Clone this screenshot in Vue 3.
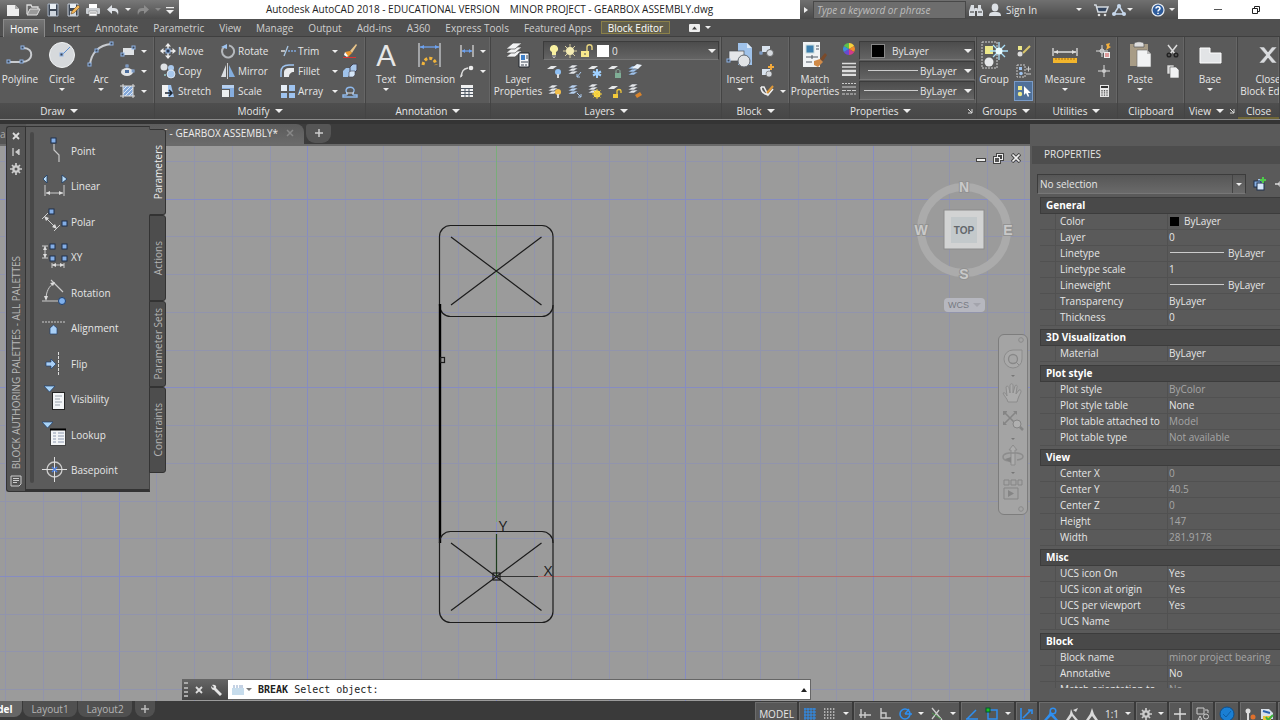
<script setup>
import { h } from 'vue'

const B = '#a9c8ec'
const W = '#e6e8ea'
const sq = (x, y, s = 3) =>
  `<rect x="${x}" y="${y}" width="${s}" height="${s}" fill="#3c4654" stroke="#8fb4e6" stroke-width="1"/>`
const grip = (x, y) =>
  `<rect x="${x}" y="${y}" width="5" height="5" fill="#84aee6" stroke="#1d2f4c" stroke-width="1"/>`
const stack = (x, y, c = W) =>
  [6, 3, 0]
    .map((d) => `<path d="M${x} ${y + d + 3}l4-3h6l-4 3z" fill="${c}" stroke="#4a4e54" stroke-width=".5"/>`)
    .join('')
const sheet = (x, y) => `<path d="M${x} ${y + 3}l4-3h6l-4 3z" fill="${W}"/>`

const icons = {
  newfile: [16, 14, `<path d="M2 2h8l4 4v7H2z" fill="#eee"/><path d="M10 2v4h4z" fill="#aaa"/>`],
  open: [16, 14, `<path d="M2 11V2h4l1 2h6v2" fill="none" stroke="#ddd" stroke-width="1.3"/><path d="M2 12l3-6h10l-3 6z" fill="#9a9a9a" stroke="#ddd"/>`],
  save: [14, 14, `<path d="M2 1h10v12H2z" fill="#3c4654" stroke="#a9b5c5"/><rect x="4" y="1" width="6" height="5" fill="#e8eef4"/><rect x="4" y="8" width="6" height="5" fill="#cfd6de"/>`],
  saveas: [14, 14, `<path d="M2 1h10v12H2z" fill="#3c4654" stroke="#c5cdd8"/><rect x="4" y="1" width="6" height="4" fill="#e8eef4"/><rect x="4" y="8" width="6" height="5" fill="#cfd6de"/><path d="M5 11l1-3 6-6 2 2-6 6z" fill="#f0b456" stroke="#604018" stroke-width=".5"/>`],
  print: [16, 14, `<rect x="4" y="1" width="8" height="4" fill="#fff"/><rect x="1" y="5" width="14" height="6" rx="1" fill="#ccd0d4"/><rect x="4" y="8" width="8" height="5" fill="#fff" stroke="#777" stroke-width=".6"/><path d="M5 10h6" stroke="#888"/>`],
  undo: [14, 14, `<path d="M6 2v3h2c4 0 5 3 4 7-1-3-2-4-4-4H6v3L1 6.500z" fill="#dfe3e8"/>`],
  redo: [14, 14, `<path d="M8 2v3H6C2 5 1 8 2 12c1-3 2-4 4-4h2v3l5-4.500z" fill="#8c8c8c"/>`],
  ddline: [10, 10, `<path d="M1 2h8v1.300H1zM1 5h8L5 9z" fill="#eee"/>`],
  polyline: [28, 28, `<path d="M2 21h14c12 0 12-14 2-14" fill="none" stroke="#c9ccd0" stroke-width="2"/>${sq(1, 19)}${sq(14, 19)}${sq(15, 5)}`],
  circle: [28, 28, `<circle cx="14" cy="14" r="12.500" fill="#d6d9dc" stroke="#f1f3f4"/><path d="M14 14l8-8" stroke="#5d8fd0"/>${sq(12, 12)}`],
  arc: [28, 28, `<path d="M3 24C4 12 12 4 24 3" fill="none" stroke="#c9ccd0" stroke-width="2"/>${sq(1, 22)}${sq(8, 8)}${sq(23, 1)}`],
  rect: [16, 14, `<rect x="3" y="4" width="11" height="7" fill="#dfe2e5"/>${sq(1, 9)}${sq(12, 2)}`],
  ellipse: [16, 14, `<ellipse cx="7" cy="8" rx="6" ry="4" fill="#e2e4e6"/><rect x="5" y="6" width="4" height="3" fill="#4d6f9f"/>${sq(6, 1, 2)}${sq(12, 6, 2)}`],
  hatch: [16, 14, `<rect x="3" y="2" width="10" height="10" fill="#85a9d9"/><path d="M3 6l4-4M3 10l8-8M5 12l8-8M9 12l4-4" stroke="#dfe9f6"/><path d="M0 2h15M0 12h15M3 0v14M13 0v14" stroke="#ddd"/>`],
  move: [16, 16, `<path d="M8 1v14M1 8h14" stroke="#e8e8e8" stroke-width="1.500"/><path d="M8 0l3 3.500H5zM8 16l3-3.500H5zM0 8l3.500-3v6zM16 8l-3.500-3v6z" fill="#eee"/><rect x="6" y="6" width="4" height="4" fill="#2b3950" stroke="#8fb4e6"/>`],
  rotate: [16, 16, `<path d="M9 2.500A6 6 0 1 1 4 4" fill="none" stroke="#b4b8bc" stroke-width="2"/><path d="M1 4l6-3v5z" fill="#9ec3ef"/>`],
  trim: [16, 16, `<path d="M1 8h4" stroke="#ddd" stroke-width="1.500"/><path d="M8 8h8" stroke="#7fa6dc" stroke-dasharray="2 1" stroke-width="1.300"/><path d="M4 13l4-10" stroke="#aac8e6" stroke-width="1.300"/>`],
  erase: [16, 16, `<path d="M8 8l6-7 1 1-5 8z" fill="#e8c48a"/><path d="M3 9l5-1 2 2-4 4z" fill="#ef9a2f"/><path d="M3 9l-1 3 3 2 1-1z" fill="#fff"/><path d="M1 14.500h13" stroke="#d33"/>`],
  copy: [16, 16, `<circle cx="4" cy="4" r="3.500" fill="#dfe2e5"/><circle cx="5" cy="12" r="1" fill="#9cc"/><circle cx="11" cy="5" r="3" fill="${B}"/><circle cx="11" cy="11" r="4" fill="${B}" stroke="#fff" stroke-width=".6"/>`],
  mirror: [16, 16, `<path d="M6 2v12H1z" fill="#dcdfe2"/><path d="M9 2v12h6z" fill="#84aede"/><path d="M7.500 0v16" stroke="#ccc"/>`],
  fillet: [16, 16, `<path d="M1 14V9c0-5 3-7 8-7h5" fill="none" stroke="#9ec3ef" stroke-width="1.500"/><path d="M4 14V9c0-2 2-4 5-4h5v4c-3 0-5 2-5 5z" fill="#e9ebed"/>`],
  explode: [16, 16, `<path d="M1 8l3-3h4v6l-2 3H1z" fill="#9fc2ea"/><path d="M8 4l3-3h4v6l-2 2H8z" fill="${B}" stroke="#445"/><path d="M7 9l2-1h4v4l-2 2H7z" fill="#d5e6f8" stroke="#445" stroke-width=".6"/>`],
  stretch: [16, 16, `<path d="M2 2h6v12H2z" fill="#f1f1f1"/><path d="M8 2h3l3 12H8z" fill="#9ec3ef"/><path d="M5 10h6M9 7l3 3-3 3" fill="none" stroke="#1d2531" stroke-width="1.500"/>`],
  scale: [16, 16, `<path d="M2 2h12v12h-4V6H2z" fill="#86aee0"/><path d="M2 2h12v3H2z" fill="#b7d0ee"/><rect x="2" y="7" width="7" height="7" fill="#eceeef"/>`],
  array: [16, 16, `<rect x="1" y="2" width="6" height="6" fill="#e6eef7"/><rect x="9" y="2" width="6" height="6" fill="#9ec3ef"/><rect x="1" y="10" width="6" height="5" fill="#9ec3ef"/><rect x="9" y="10" width="6" height="5" fill="#9ec3ef"/>`],
  offset: [16, 16, `<path d="M1 14h14v-2h-3c-2 0-1-2 0-4 1-5-8-5-8 0 1 2 2 4 0 4H1z" fill="none" stroke="#8fb9ec" stroke-width="1.400"/><path d="M4 10h8" stroke="#ddd"/>`],
  dimension: [26, 28, `<path d="M2 2v24M23 2v24" stroke="#c9ccd0" stroke-width="1.300"/><path d="M3 6h19" stroke="#6ea2f0" stroke-width="1.300"/><path d="M3 6l4-2v4zM22 6l-4-2v4z" fill="#6ea2f0"/><path d="M6 24c1-9 12-9 13 0" fill="none" stroke="#f2b53c" stroke-width="3" stroke-dasharray="3 2"/>`],
  lindim: [16, 14, `<path d="M2 1v12M14 1v12" stroke="#ccc" stroke-width="1.400"/><path d="M3 7h10" stroke="#6ea2f0" stroke-width="1.300"/><path d="M3 7l3-2v4zM13 7l-3-2v4z" fill="#6ea2f0"/>`],
  leader: [16, 14, `<path d="M2 13C3 7 4 5 9 4" fill="none" stroke="#ddd" stroke-width="1.400"/><path d="M1 14l1-4 2 1z" fill="#ddd"/><circle cx="12" cy="4" r="2.300" fill="#eee"/>`],
  table: [16, 14, `<rect x="2" y="1" width="12" height="12" fill="#f0f0f0"/><path d="M2 4.500h12M2 7.500h12M2 10.500h12M6 4v9M10 4v9" stroke="#4d5662"/>`],
  layerprops: [28, 28, `${[12, 8, 4].map((y) => `<path d="M2 ${y + 4}l7-6h9l-7 6z" fill="#f2f3f4" stroke="#4c4c4c" stroke-width=".7"/>`).join('')}<path d="M15 12h10v14H15z" fill="#f3f5f7" stroke="#20262e"/><rect x="17" y="14" width="4" height="5" fill="#3e7fc8"/><path d="M22 15h2M22 17h2M17 21h7M17 24h3M22 23v2" stroke="#3c4654"/>`],
  bulb: [12, 16, `<path d="M6 2a3.700 3.700 0 0 1 2 7v3H4V9a3.700 3.700 0 0 1 2-7z" fill="#f8f0a0"/><path d="M4 13h4M5 14.500h2" stroke="#b9b9b9"/>`],
  sun: [14, 16, `<path d="M7 1v14M0 8h14M2 3l10 10M12 3L2 13" stroke="#d8cfa0"/><circle cx="7" cy="8" r="4" fill="#f4ecb4"/>`],
  unlock: [14, 16, `<rect x="1" y="8" width="8" height="6" fill="#f7e88c"/><path d="M7 8V4c0-3 5-3 5 0v3" fill="none" stroke="#e8d680" stroke-width="1.400"/><path d="M5 10v2" stroke="#555"/>`],
  l1: [16, 16, `${sheet(0, 3)}<circle cx="11" cy="9" r="3" fill="#8fc0f4"/><path d="M11 11v4" stroke="#ddd" stroke-width="2"/>`],
  l2: [16, 16, `${stack(1, 2)}<path d="M14 9l-4 5M10 11v3h3" stroke="${B}" fill="none"/>`],
  l3: [16, 16, `${sheet(1, 3)}<path d="M10 6v9M6 8.500l8 4M6 12.500l8-4" stroke="#9fd0ff" stroke-width="2"/>`],
  l4: [16, 16, `${sheet(1, 3)}<rect x="8" y="10" width="6" height="5" fill="#7fae96"/><path d="M9 10V8c0-2 4-2 4 0v2" fill="none" stroke="#8fb0a0"/>`],
  l5: [16, 16, `${stack(1, 3, '#9fc2ea')}<path d="M5 5l5-4 5 1-4 4z" fill="#e9f1fa"/>`],
  l6: [16, 16, `${stack(1, 2)}<circle cx="11" cy="9" r="3" fill="#f5c04a"/><path d="M11 11v4" stroke="#ddd" stroke-width="2"/>`],
  l7: [16, 16, `${stack(1, 2, '#b9d2f0')}<path d="M10 10l4 4M14 11v3h-3" stroke="${B}" fill="none"/>`],
  l8: [16, 16, `${stack(1, 1)}<circle cx="10" cy="11" r="3.500" fill="#fbe04c"/><path d="M10 6v10M5 11h10M6.500 7.500l7 7M13.500 7.500l-7 7" stroke="#f3c93a"/>`],
  l9: [16, 16, `${sheet(1, 3)}<rect x="6" y="11" width="5" height="4" fill="#f3c93a"/><path d="M10 11V8c0-2 4-2 4 0v2" fill="none" stroke="#f3c93a" stroke-width="1.300"/>`],
  l10: [16, 16, `${stack(1, 1)}<path d="M8 12l5-3 2 3-5 3z" fill="#d9842c"/>`],
  insert: [28, 28, `<path d="M12 2h9l5 5v17H12z" fill="#9fc2ea"/><path d="M21 2v5h5z" fill="#dce9f8"/><rect x="3" y="10" width="15" height="10" fill="#e4e6e9" stroke="#4a4e54" stroke-width=".7"/><circle cx="18" cy="20" r="6" fill="#e0e3e6" stroke="#60666e"/>${sq(1, 18)}`],
  bedit1: [16, 14, `<rect x="3" y="2" width="8" height="6" fill="#d9e3ee"/><circle cx="11" cy="9" r="3.500" fill="#d5d9de" stroke="#606060"/>${sq(1, 8, 2)}`],
  bedit2: [16, 14, `<rect x="3" y="5" width="8" height="6" fill="#d9e3ee"/><circle cx="10" cy="10" r="3" fill="#d5d9de" stroke="#606060" stroke-width=".6"/><path d="M12 0v6M9 3h6" stroke="#f3a93a" stroke-width="2"/>`],
  bedit3: [16, 14, `<path d="M2 3h3l4 8 5-6M2 3c0 5 3 7 7 8" fill="none" stroke="#eee" stroke-width="1.600"/><path d="M8 9l6-7" stroke="#e09a3a" stroke-width="2"/>`],
  match: [28, 28, `<rect x="2" y="1" width="17" height="25" fill="#f1f3f5"/><rect x="5" y="4" width="8" height="8" fill="#3d7fae" stroke="#cdd"/><path d="M15 5h3M15 8h3M5 16h12M11 14v4M5 21h6" stroke="#4d5662"/><path d="M19 18l5-6 2 2-4 6z" fill="#7a4a2a"/><path d="M13 20l6-2 3 3-5 5-4-2z" fill="#d08a48"/>`],
  wheel: [14, 14, `<path d="M7 7V1a6 6 0 0 1 5.200 3z" fill="#f7d13c"/><path d="M7 7l5.200-3a6 6 0 0 1 0 6z" fill="#f08a2c"/><path d="M7 7l5.200 3A6 6 0 0 1 7 13z" fill="#d33b8a"/><path d="M7 7v6a6 6 0 0 1-5.200-3z" fill="#6a4ad0"/><path d="M7 7l-5.200 3a6 6 0 0 1 0-6z" fill="#3d8fe0"/><path d="M7 7L1.800 4A6 6 0 0 1 7 1z" fill="#5cc04c"/>`],
  weights: [14, 14, `<path d="M0 1.500h14M0 5h14" stroke="#ddd" stroke-width="1.500"/><path d="M0 9h14M0 13h14" stroke="#ddd" stroke-width="2.500"/>`],
  types: [14, 14, `<path d="M0 1.500h14" stroke="#ccc" stroke-dasharray="2 1"/><path d="M0 5h14" stroke="#ccc"/><path d="M0 8.500h14" stroke="#ccc" stroke-dasharray="4 1"/><path d="M0 12h14" stroke="#ccc" stroke-dasharray="3 1"/>`],
  group: [28, 28, `<rect x="2" y="1" width="15" height="26" fill="none" stroke="#cfcfcf" stroke-dasharray="2 1"/><rect x="5" y="5" width="8" height="8" fill="#ece88a"/><circle cx="9" cy="21" r="4.500" fill="#e6e8ea"/><path d="M19 1v18M10 10h18M13 4l12 12M25 4L13 16" stroke="#a8def8" stroke-width="1.300"/><circle cx="19" cy="10" r="3.500" fill="#e8fbff"/>`],
  g1: [16, 14, `<rect x="2" y="2" width="4" height="4" fill="#ece88a"/><circle cx="4" cy="10" r="2.500" fill="#ddd"/><path d="M7 9l7-7" stroke="#d9c56a" stroke-width="2"/>`],
  g2: [16, 14, `<rect x="1" y="1" width="8" height="12" fill="none" stroke="#ccc" stroke-dasharray="2 1"/><rect x="3" y="3" width="3" height="3" fill="#9ec3ef"/><circle cx="5" cy="9.500" r="1.800" fill="#9ec3ef"/><path d="M10 5h5M12.500 2.500v5M10 10h5" stroke="#ccc"/>`],
  g3: [16, 14, `<rect x="2" y="2" width="4" height="4" fill="#ece88a"/><circle cx="4" cy="10" r="2.200" fill="#ece88a"/><path d="M8 2v9l2-2 2 4 1-1-1-3h3z" fill="#fff"/>`],
  measure: [28, 28, `<path d="M2 7v8M26 7v8M3 11h22" stroke="#ddd" stroke-width="1.300"/><path d="M3 11l4-2v4zM25 11l-4-2v4z" fill="#ddd"/><rect x="2" y="17" width="24" height="5" fill="#f3b62c"/><path d="M5 17v2M8 17v2M11 17v2M14 17v2M17 17v2M20 17v2M23 17v2" stroke="#a86f0e"/>`],
  u1: [16, 16, `<path d="M6 2v12M0 8h12" stroke="#ddd"/><circle cx="6" cy="8" r="2" fill="none" stroke="#ddd"/><path d="M10 1l4-1-1 3 2 1-5 3 1-3z" fill="#f5b03c"/><rect x="8" y="9" width="6" height="6" fill="#eee"/><path d="M9 11h4M9 13h4" stroke="#c44"/>`],
  u2: [16, 16, `<path d="M8 2v12M2 8h12" stroke="#ddd"/><circle cx="8" cy="8" r="2" fill="#ccc"/>`],
  u3: [16, 16, `<rect x="4" y="2" width="9" height="12" fill="#e8e8e8"/><rect x="5" y="3" width="7" height="2" fill="#333"/><path d="M6 7v6M8.500 7v6M11 7v6" stroke="#555" stroke-width="1.300" stroke-dasharray="1.400 .8"/>`],
  paste: [28, 28, `<rect x="4" y="3" width="18" height="22" fill="#a89c86"/><path d="M8 3c0-3 10-3 10 0v3H8z" fill="#ddd" stroke="#555" stroke-width=".7"/><path d="M11 9h10l4 4v13H11z" fill="#f1f2f3" stroke="#666" stroke-width=".6"/><path d="M21 9v4h4z" fill="#bbb"/>`],
  cut: [16, 14, `<path d="M3 1l7 9M12 1L5 10" stroke="#ddd" stroke-width="1.500"/><circle cx="4" cy="11" r="1.800" fill="none" stroke="#222" stroke-width="1.500"/><circle cx="11" cy="11" r="1.800" fill="none" stroke="#222" stroke-width="1.500"/>`],
  clip2: [16, 14, `<path d="M2 1h7v9H2z" fill="#ddd" stroke="#555" stroke-width=".6"/><path d="M5 3h6l3 3v8H5z" fill="#f1f2f3" stroke="#555" stroke-width=".6"/>`],
  base: [28, 28, `<path d="M4 7h10v5h11v10H4z" fill="#e2e4e6" stroke="#fff"/>`],
  closex: [28, 28, `<path d="M5 6h5l4 5 4-5h5l-7 8 7 8h-5l-4-5-4 5H5l7-8z" fill="#d9dbde" stroke="#555" stroke-width=".5"/>`],
  find: [16, 14, `<path d="M3 2h3v3l1 2v6H1V8zM10 2h3v3l2 3v5H9V7l1-2z" fill="#d9dde2"/><rect x="6.500" y="5" width="3" height="3" fill="#d9dde2"/><path d="M2 9h4M10 9h4" stroke="#333"/>`],
  user: [14, 14, `<ellipse cx="7" cy="4.500" rx="3.300" ry="4" fill="#dde1e6"/><path d="M1 13c0-4 3-4 6-4s6 0 6 4z" fill="#dde1e6"/>`],
  cart: [16, 14, `<path d="M1 2h2l2 7h8l2-5H4" fill="#33455f" stroke="#d5dae0" stroke-width="1.500"/><circle cx="6" cy="12" r="1.300" fill="#ddd"/><circle cx="12" cy="12" r="1.300" fill="#ddd"/>`],
  a360: [16, 14, `<path d="M8 3l5 8H3z" fill="none" stroke="#c7d8ec" stroke-width="1.500"/><circle cx="8" cy="3" r="2" fill="#c7d8ec"/><circle cx="3" cy="11" r="2" fill="#c7d8ec"/><circle cx="13" cy="11" r="2" fill="#c7d8ec"/>`],
  help: [14, 14, `<circle cx="7" cy="7" r="6" fill="#2e5c9c" stroke="#e9eef5" stroke-width="1.200"/><path d="M5 5.500c0-2.500 4-2.500 4 0C9 7 7 6.800 7 8.500M7 9.800v1.300" fill="none" stroke="#fff" stroke-width="1.500"/>`],
  pPoint: [28, 28, `<path d="M12 7v6l5 5v7" fill="none" stroke="#c9c9c9" stroke-width="1.200"/>${grip(9, 1)}`],
  pLinear: [28, 28, `<path d="M5 3v8L1 7zM20 3v8l5-4z" fill="#b9dcf8" stroke="#1b3a63" stroke-width=".8"/><path d="M3 13v11M22 13v11M4 21h17" stroke="#ccc"/><path d="M4 21l4-2v4zM21 21l-4-2v4z" fill="#ddd"/>`],
  pPolar: [28, 28, `${grip(7, 1)}${grip(20, 13)}<path d="M3 9l11 11M0 11l6-6M12 23l6-6" stroke="#ccc"/><path d="M2 8l5 2-3 3zM15 21l-5-2 3-3z" fill="#ddd"/>`],
  pXY: [28, 28, `${grip(8, 1)}${grip(20, 1)}${grip(8, 13)}${grip(20, 13)}<path d="M0 3h6M0 15h6M3 3v12M10 20v5M22 20v5M10 22h12" stroke="#ccc"/><path d="M3 3l2 4H1zM3 15l2-4H1zM10 22l4-2v4zM22 22l-4-2v4z" fill="#ddd"/>`],
  pRotation: [28, 28, `<path d="M0 22h20M9 1l12 12" stroke="#ccc" stroke-width="1.200"/><path d="M4 20C4 13 7 7 12 4" fill="none" stroke="#ccc"/><path d="M4 22l-2-5h4zM13 3l-5 1 3 3z" fill="#ddd"/><circle cx="20" cy="22" r="3.500" fill="#7fb0ec" stroke="#1d3f70"/>`],
  pAlign: [28, 28, `<path d="M0 8h24" stroke="#ccc" stroke-dasharray="2 1"/><path d="M8 20v-6l3.500-3 3.500 3v6z" fill="#a9cff6" stroke="#1d3f70" stroke-width=".7"/>`],
  pFlip: [28, 28, `<path d="M16.500 2v23" stroke="#ddd" stroke-dasharray="3 1"/><path d="M4 12h5V9l5 5-5 5v-3H4z" fill="#a9cff6" stroke="#1d3f70" stroke-width=".7"/>`],
  pVis: [28, 28, `<path d="M2 1h11L7.500 7z" fill="#a9d4f8" stroke="#1d3f70" stroke-width=".7"/><rect x="10.500" y="7.500" width="12" height="17" fill="#f3f5f7" stroke="#222"/><path d="M13 11h7M13 14h5M13 17h7M13 20h5" stroke="#9aa3ad"/>`],
  pLook: [28, 28, `<path d="M0 1h11L5.500 7z" fill="#a9d4f8" stroke="#1d3f70" stroke-width=".7"/><rect x="8.500" y="8.500" width="15" height="16" fill="#f3f5f7" stroke="#444"/><path d="M8 8.500h16" stroke="#000" stroke-width="2"/><path d="M11 12h3M16 12h6M11 15h3M16 15h6M11 18h3M16 18h6M11 21h3M16 21h6" stroke="#8d99b0"/>`],
  pBase: [28, 28, `<circle cx="12.500" cy="13.500" r="7.500" fill="none" stroke="#ccc" stroke-width="1.300"/><path d="M12.500 1v25M0 13.500h25" stroke="#ddd"/><path d="M10 11l5 5M15 11l-5 5" stroke="#4c7fe0" stroke-width="1.500"/>`],
  x: [10, 10, `<path d="M2 2l6 6M8 2L2 8" stroke="#ddd" stroke-width="1.800"/>`],
  pin: [10, 10, `<path d="M2 1v8M8 2v6" stroke="#ccc" stroke-width="1.300"/><path d="M8 2v6L4 5z" fill="#ccc"/>`],
  gear: [12, 12, `<path d="M6 0v12M0 6h12M2 2l8 8M10 2l-8 8" stroke="#ccc" stroke-width="1.700"/><circle cx="6" cy="6" r="3.800" fill="#ccc"/><circle cx="6" cy="6" r="1.500" fill="#555"/>`],
  props: [12, 12, `<path d="M1 1h10v8l-2 2H1z" fill="none" stroke="#ccc"/><path d="M3 3.500h6M3 5.500h6M3 7.500h4" stroke="#ccc"/>`],
  wrench: [14, 14, `<path d="M2 2c3-1 5 1 4 3l6 6-2 2-6-6C2 7 1 5 1 3l2 2 1-1z" fill="#e6e6e6"/>`],
  cmd: [14, 12, `<rect x="1" y="4" width="12" height="7" fill="#c6dcec"/><path d="M3 1v3M6 1v3M9 1v3M11 1v3" stroke="#8aa4c8"/>`],
  quick: [14, 14, `<rect x="5" y="2" width="6" height="6" fill="#9fc2ea"/><rect x="1" y="4" width="7" height="6" fill="#86aee0" stroke="#1d2f4c"/><rect x="4" y="6" width="7" height="7" fill="#d5e6f8" stroke="#1d2f4c"/><path d="M10 0v6M7 3h6" stroke="#4ec94a" stroke-width="2"/>`],
  pick: [14, 14, `<path d="M7 1v12M1 7h12" stroke="#ddd" stroke-width="1.400"/><circle cx="7" cy="7" r="2.500" fill="none" stroke="#ddd"/>`],
  sGrid: [14, 14, `<path d="M1 2h12M1 5h12M1 8h12M1 11h12M2 1v12M5 1v12M8 1v12M11 1v12" stroke="#2f8ff0"/>`],
  sSnap: [14, 14, `<path d="M1 2h12M1 5h12M1 8h12M1 11h12" stroke="#ccc" stroke-width="1.400" stroke-dasharray="1.400 1.600"/>`],
  sInfer: [14, 14, `<path d="M3 2v9M1 8h12M7 5v6" stroke="#ccc" stroke-width="1.400"/>`],
  sOrtho: [14, 14, `<path d="M3 1v10h10M3 6h5v5" fill="none" stroke="#ccc" stroke-width="1.400"/>`],
  sPolar: [14, 14, `<circle cx="7" cy="7" r="5" fill="none" stroke="#2f8ff0" stroke-width="1.600"/><path d="M7 7h7M7 7l4-5" stroke="#2f8ff0" stroke-width="1.400"/>`],
  sIso: [14, 14, `<path d="M2 1l10 12M2 12L9 3" stroke="#ccc" stroke-width="1.300"/><path d="M2 6l9 6" stroke="#4a9a4a"/>`],
  sTrack: [14, 14, `<path d="M1 12h12M2 12l9-9" stroke="#2f8ff0" stroke-width="1.500"/>`],
  sOsnap: [14, 14, `<rect x="3" y="3" width="9" height="9" fill="none" stroke="#2f8ff0" stroke-width="1.500"/><rect x="1" y="1" width="4" height="4" fill="#1ec01e" stroke="#053"/>`],
  sDyn: [14, 14, `<path d="M1 1v12h10M3 11l8-8M8 3h4v4" fill="none" stroke="#2f8ff0" stroke-width="1.600"/>`],
  sA1: [16, 14, `<path d="M8 1l2 6 5 6h-3L8 9l-4 4H1l5-6z" fill="#2f8ff0"/><circle cx="10" cy="4" r="2.800" fill="#555" stroke="#2f8ff0" stroke-width="1.500"/>`],
  sA2: [14, 14, `<path d="M6 2l2 5 5 6h-3L7 9l-3 4H1l4-6z" fill="#d9d9d9"/><path d="M8 3l5-2-2 4z" fill="#d9d9d9"/>`],
  sA3: [14, 14, `<path d="M7 1l2 6 4 6h-3L7 9l-3 4H1l4-6z" fill="#d9d9d9"/>`],
  sPlus: [14, 14, `<path d="M7 1v12M1 7h12" stroke="#ddd" stroke-width="1.400"/>`],
  sIso2: [14, 14, `<path d="M1 1h7v6H1zM9 3h3v3" fill="none" stroke="#ccc"/><circle cx="10" cy="9.500" r="2.500" fill="none" stroke="#ccc"/><path d="M4 9l-2 4h4z" fill="none" stroke="#ccc"/>`],
  sHw: [16, 16, `<circle cx="8" cy="8" r="7" fill="#1a7fd4" stroke="#0d4f8c"/><path d="M4 8l3 3 5-6" fill="none" stroke="#0f5ea5"/>`],
  sClean: [14, 14, `<circle cx="5" cy="4" r="2.500" fill="#ddd"/><path d="M5 5v8" stroke="#ddd" stroke-width="2"/><circle cx="10" cy="10" r="2.500" fill="#e0702c"/>`],
  sPerf: [14, 14, `<path d="M1 2h8l4 4v6H1z" fill="#d8e0ea"/><path d="M3 4l7 2" stroke="#2b62b0" stroke-width="2"/><path d="M3 9h8v4H3z" fill="#e8c23c"/><path d="M6 10l2 3 5-5" fill="none" stroke="#3cb43c" stroke-width="2"/>`],
  nWheel: [24, 24, `<path d="M12 3a9 9 0 1 0 9 9V3z" fill="#a9a9a9" stroke="#8c8c8c"/><circle cx="12" cy="12" r="4.500" fill="#a6a6a6" stroke="#888" stroke-width="1.300"/><path d="M15 15l3 3" stroke="#888"/>`],
  nHand: [24, 24, `<path d="M7 21c-1-4-4-6-5-9 2-1 3 1 4 3L5 6c1-2 3 0 3 1l1 5V4c1-2 3-1 3 0v8l2-7c1-2 3 0 2 1l-1 7 3-4c2-1 2 1 2 2-2 4-3 6-4 10z" fill="#acacac" stroke="#8c8c8c"/>`],
  nZoom: [24, 24, `<path d="M3 3l12 12M15 3L3 15" stroke="#858585" stroke-width="1.500"/><path d="M2 2h4v1L3 6H2zM16 2v4l-4-4zM2 16v-4l4 4z" fill="#858585"/><circle cx="16" cy="15" r="4" fill="#b0b0b0" stroke="#858585"/><path d="M19 18l3 3" stroke="#858585" stroke-width="2.500"/>`],
  nOrbit: [24, 24, `<path d="M12 1l4 5h-2v15h-4V6H8z" fill="#acacac" stroke="#8c8c8c"/><path d="M8 17c-8-1-8-7 0-8h8c8 1 8 6 0 7" fill="none" stroke="#8c8c8c" stroke-width="1.500"/><path d="M4 15l6-2v6z" fill="#858585"/>`],
  nMotion: [24, 24, `<path d="M3 2h5v5H3zM10 2h5v5h-5zM17 2h4v5h-4zM3 10h14v11H3z" fill="none" stroke="#858585"/><path d="M7 12v7l6-3.500z" fill="#858585"/>`],
}

const Ico = (p) => {
  const [w, ht, body] = icons[p.n]
  return h('svg', { viewBox: `0 0 ${w} ${ht}`, width: w, height: ht, 'aria-hidden': 'true', innerHTML: body })
}
Ico.props = ['n']

const tabs = ['Home', 'Insert', 'Annotate', 'Parametric', 'View', 'Manage', 'Output', 'Add-ins', 'A360', 'Express Tools', 'Featured Apps', 'Block Editor']
const modify = [
  [['move', 'Move'], ['copy', 'Copy'], ['stretch', 'Stretch']],
  [['rotate', 'Rotate'], ['mirror', 'Mirror'], ['scale', 'Scale']],
  [['trim', 'Trim', 1], ['fillet', 'Fillet', 1], ['array', 'Array', 1]],
]
const params = [
  ['pPoint', 'Point'], ['pLinear', 'Linear'], ['pPolar', 'Polar'], ['pXY', 'XY'], ['pRotation', 'Rotation'],
  ['pAlign', 'Alignment'], ['pFlip', 'Flip'], ['pVis', 'Visibility'], ['pLook', 'Lookup'], ['pBase', 'Basepoint'],
]
const sections = [
  ['General', [['Color', 'ByLayer', 'swatch'], ['Layer', '0'], ['Linetype', 'ByLayer', 'line'], ['Linetype scale', '1'], ['Lineweight', 'ByLayer', 'line'], ['Transparency', 'ByLayer'], ['Thickness', '0']]],
  ['3D Visualization', [['Material', 'ByLayer']]],
  ['Plot style', [['Plot style', 'ByColor', 'dim'], ['Plot style table', 'None'], ['Plot table attached to', 'Model', 'dim'], ['Plot table type', 'Not available', 'dim']]],
  ['View', [['Center X', '0', 'dim'], ['Center Y', '40.5', 'dim'], ['Center Z', '0', 'dim'], ['Height', '147', 'dim'], ['Width', '281.9178', 'dim']]],
  ['Misc', [['UCS icon On', 'Yes'], ['UCS icon at origin', 'Yes'], ['UCS per viewport', 'Yes'], ['UCS Name', '']]],
  ['Block', [['Block name', 'minor project bearing', 'dim'], ['Annotative', 'No'], ['Match orientation to', 'No', 'dim']]],
]
const status = [
  ['sGrid', 'sSnap', 'v'], ['sInfer', 'sOrtho', 'sPolar', 'v', 'sIso', 'v'], ['sTrack', 'sOsnap', 'v'], ['sDyn'],
  ['sA1', 'sA2', 'sA3', '1:1', 'v'], ['gear', 'v'], ['sPlus'], ['sIso2'], ['sHw'], ['sClean', 'sPerf'], ['props'],
]

const step = 37.74
const origin = { x: 496, y: 430 }
const lines = (o) => Array.from({ length: 81 }, (_, i) => i - 40).map((k) => ({ p: Math.round(o + k * step) + 0.5, major: k % 5 === 0 }))
const cols = lines(origin.x)
const rows = lines(origin.y)
</script>

<template>
  <div class="app">
    <header class="titlebar">
      <div class="quick">
        <button v-for="n in ['newfile', 'open', 'save', 'saveas', 'print', 'undo']" :key="n" :aria-label="n"><Ico :n="n" /></button>
        <i class="dd"></i>
        <button aria-label="redo"><Ico n="redo" /></button>
        <i class="dd faint"></i>
        <button class="narrow" aria-label="customize"><Ico n="ddline" /></button>
      </div>
      <h1>Autodesk AutoCAD 2018 - EDUCATIONAL VERSION<span>MINOR PROJECT - GEARBOX ASSEMBLY.dwg</span></h1>
      <div class="info">
        <i class="tri-r"></i>
        <input type="search" aria-label="Search" placeholder="Type a keyword or phrase" />
        <button aria-label="Find"><Ico n="find" /></button>
        <button class="sign"><Ico n="user" />Sign In</button>
        <i class="dd"></i>
        <button class="cart" aria-label="Store"><Ico n="cart" /></button>
        <button aria-label="A360"><Ico n="a360" /></button>
        <i class="dd"></i>
        <button class="help" aria-label="Help"><Ico n="help" /></button>
        <i class="dd"></i>
      </div>
      <div class="win">
        <button aria-label="Minimize"><svg width="10" height="10"><path d="M1 4.500h8" stroke="#555" /></svg></button>
        <button aria-label="Restore"><svg width="10" height="10"><path d="M1.500 3.500h5v5h-5zM3.500 3.500v-2h5v5h-2" fill="none" stroke="#222" /></svg></button>
      </div>
    </header>

    <nav class="tabs">
      <button v-for="t in tabs" :key="t" :class="{ on: t === 'Home', ctx: t === 'Block Editor' }">{{ t }}</button>
      <button class="minir" aria-label="Minimize ribbon"><svg width="11" height="8"><rect width="11" height="8" rx="1" fill="#eee" /><path d="M3 5.500l2.500-3 2.500 3z" fill="#444" /></svg></button>
      <i class="dd"></i>
    </nav>

    <div class="ribbon">
      <section class="panel draw">
        <div class="body">
          <button class="big w40"><Ico n="polyline" /><span>Polyline</span></button>
          <button class="big w44"><Ico n="circle" /><span>Circle</span><i class="dd"></i></button>
          <button class="big w34"><Ico n="arc" /><span>Arc</span><i class="dd"></i></button>
          <div class="stack">
            <button v-for="n in ['rect', 'ellipse', 'hatch']" :key="n" :aria-label="n"><Ico :n="n" /><i class="dd"></i></button>
          </div>
        </div>
        <h2>Draw<i class="dd big-dd"></i></h2>
      </section>
      <section class="panel modify">
        <div class="body">
          <div v-for="(c, i) in modify" :key="i" class="stack col">
            <button v-for="b in c" :key="b[1]"><Ico :n="b[0]" /><span>{{ b[1] }}</span><i v-if="b[2]" class="dd"></i></button>
          </div>
          <div class="stack last">
            <button v-for="n in ['erase', 'explode', 'offset']" :key="n" :aria-label="n"><Ico :n="n" /></button>
          </div>
        </div>
        <h2>Modify<i class="dd big-dd"></i></h2>
      </section>
      <section class="panel annot">
        <div class="body">
          <button class="big w34"><b class="letter">A</b><span>Text</span><i class="dd"></i></button>
          <button class="big w54"><Ico n="dimension" /><span>Dimension</span></button>
          <div class="stack">
            <button aria-label="Linear"><Ico n="lindim" /><i class="dd"></i></button>
            <button aria-label="Leader"><Ico n="leader" /><i class="dd"></i></button>
            <button aria-label="Table"><Ico n="table" /></button>
          </div>
        </div>
        <h2>Annotation<i class="dd big-dd"></i></h2>
      </section>
      <section class="panel layers">
        <div class="body">
          <button class="big w50"><Ico n="layerprops" /><span>Layer<br />Properties</span></button>
          <div class="lay">
            <div class="combo">
              <Ico n="bulb" /><Ico n="sun" /><Ico n="unlock" /><i class="sw white"></i>
              <select aria-label="Layer"><option>0</option></select><i class="dd big-dd"></i>
            </div>
            <div class="lrow"><button v-for="k in 5" :key="k" :aria-label="'Layer tool ' + k"><Ico :n="'l' + k" /></button></div>
            <div class="lrow"><button v-for="k in 5" :key="k" :aria-label="'Layer tool ' + (k + 5)"><Ico :n="'l' + (k + 5)" /></button></div>
          </div>
        </div>
        <h2>Layers<i class="dd big-dd"></i></h2>
      </section>
      <section class="panel block">
        <div class="body">
          <button class="big w34"><Ico n="insert" /><span>Insert</span><i class="dd"></i></button>
          <div class="stack">
            <button aria-label="Create"><Ico n="bedit1" /></button>
            <button aria-label="Edit"><Ico n="bedit2" /></button>
            <button aria-label="Attributes"><Ico n="bedit3" /><i class="dd"></i></button>
          </div>
        </div>
        <h2>Block<i class="dd big-dd"></i></h2>
      </section>
      <section class="panel propsp">
        <div class="body">
          <button class="big w50"><Ico n="match" /><span>Match<br />Properties</span></button>
          <div class="stack three"><Ico n="wheel" /><Ico n="weights" /><Ico n="types" /></div>
          <div class="combos">
            <div class="combo"><i class="sw black"></i><select aria-label="Color"><option>ByLayer</option></select><i class="dd big-dd"></i></div>
            <div class="combo"><i class="ln"></i><select aria-label="Lineweight"><option>ByLayer</option></select><i class="dd big-dd"></i></div>
            <div class="combo"><i class="ln long"></i><select aria-label="Linetype"><option>ByLayer</option></select><i class="dd big-dd"></i></div>
          </div>
        </div>
        <h2>Properties<i class="dd big-dd"></i><svg class="corner" width="6" height="6"><path d="M1 1l4 4M5 1v4H1" fill="none" stroke="#ddd" /></svg></h2>
      </section>
      <section class="panel groups">
        <div class="body">
          <button class="big w34"><Ico n="group" /><span>Group</span></button>
          <div class="stack">
            <button aria-label="Ungroup"><Ico n="g1" /></button>
            <button aria-label="Group edit"><Ico n="g2" /></button>
            <button aria-label="Group selection" class="active"><Ico n="g3" /></button>
          </div>
        </div>
        <h2>Groups<i class="dd big-dd"></i></h2>
      </section>
      <section class="panel utils">
        <div class="body">
          <button class="big w54"><Ico n="measure" /><span>Measure</span><i class="dd"></i></button>
          <div class="stack"><button v-for="n in ['u1', 'u2', 'u3']" :key="n" :aria-label="n"><Ico :n="n" /></button></div>
        </div>
        <h2>Utilities<i class="dd big-dd"></i></h2>
      </section>
      <section class="panel clipb">
        <div class="body">
          <button class="big w44"><Ico n="paste" /><span>Paste</span><i class="dd"></i></button>
          <div class="stack"><button aria-label="Cut"><Ico n="cut" /></button><button aria-label="Copy clip"><Ico n="clip2" /></button></div>
        </div>
        <h2>Clipboard</h2>
      </section>
      <section class="panel view">
        <div class="body"><button class="big w50"><Ico n="base" /><span>Base</span><i class="dd"></i></button></div>
        <h2>View<i class="dd big-dd"></i><svg class="corner" width="6" height="6"><path d="M1 1l4 4M5 1v4H1" fill="none" stroke="#ddd" /></svg></h2>
      </section>
      <section class="panel closep">
        <div class="body"><button class="big w60"><Ico n="closex" /><span>Close<br />Block Editor</span></button></div>
        <h2>Close</h2>
      </section>
    </div>

    <main>
      <div class="work">
        <div class="filetabs">
          <button class="ft start">Start</button>
          <button class="ft cur">MINOR PROJECT - GEARBOX ASSEMBLY*<svg width="8" height="8"><path d="M1 1l6 6M7 1L1 7" stroke="#888" stroke-width="1.500" /></svg></button>
          <button class="ft add" aria-label="New tab"><svg width="8" height="8"><path d="M4 0v8M0 4h8" stroke="#ccc" stroke-width="1.500" /></svg></button>
        </div>
        <div class="canvas">
          <svg class="drawing" width="100%" height="100%">
            <line v-for="c in cols" :key="'c' + c.p" :x1="c.p" y1="0" :x2="c.p" y2="100%" :class="c.major ? 'major' : 'minor'" />
            <line v-for="r in rows" :key="'r' + r.p" x1="0" :y1="r.p" x2="100%" :y2="r.p" :class="r.major ? 'major' : 'minor'" />
            <path d="M496.500 0v376" stroke="#7aac7a" />
            <line x1="538" y1="430.500" x2="100%" y2="430.500" stroke="#b56a6a" />
            <g fill="none" stroke="#1c1c1c" stroke-width="1.200">
              <rect x="439.500" y="79.500" width="113.500" height="91" rx="11" />
              <path d="M451 91l90.500 68M541.500 91L451 159" />
              <path d="M553 159v238" />
              <path d="M440 158v239" stroke="#000" stroke-width="2.400" />
              <rect x="440.500" y="211.500" width="4" height="5" />
              <rect x="439.500" y="385.500" width="113.500" height="91" rx="11" />
              <path d="M451 397l90.500 67.500M541.500 397L451 464.500" />
              <path d="M496.500 430V388" stroke="#1d3d1d" />
              <path d="M496.500 430.500H538" stroke="#333" />
              <rect x="493" y="427" width="7" height="7" />
            </g>
            <g font-family="Open Sans, sans-serif" font-size="15" fill="#1c1c1c" text-anchor="middle">
              <text x="503" y="385">Y</text>
              <text x="548" y="430">X</text>
            </g>
          </svg>

          <div class="mdi">
            <svg width="10" height="10"><rect x=".5" y="5.500" width="9" height="3" fill="#eee" stroke="#444" /></svg>
            <svg width="11" height="11"><rect x="3" y="0" width="8" height="8" fill="#444" /><rect x="0" y="3" width="8" height="8" fill="#444" /><rect x="4.500" y="1.500" width="5" height="5" fill="none" stroke="#eee" /><rect x="1.500" y="4.500" width="5" height="5" fill="#555" stroke="#eee" /></svg>
            <svg width="10" height="10"><path d="M1 1l8 8M9 1L1 9" stroke="#444" stroke-width="3.500" /><path d="M1.500 1.500l7 7M8.500 1.500l-7 7" stroke="#f2f2f2" stroke-width="1.600" /></svg>
          </div>

          <svg class="cube" viewBox="0 0 104 110" width="104" height="110">
            <circle cx="52" cy="54" r="43" fill="none" stroke="#ababab" stroke-width="8" />
            <g font-family="Liberation Sans, sans-serif" font-size="14" font-weight="700" fill="#c9c9c9" stroke="#929292" stroke-width="2" paint-order="stroke" text-anchor="middle">
              <text x="52" y="16">N</text><text x="52" y="103">S</text><text x="9" y="59">W</text><text x="96" y="59">E</text>
            </g>
            <rect x="32" y="34" width="40" height="39" fill="#d2d3d3" stroke="#8c8c8c" />
            <rect x="39" y="41" width="26" height="26" fill="#c3c9cb" />
            <text x="52" y="58" font-family="Liberation Sans, sans-serif" font-size="10" font-weight="700" fill="#63686c" text-anchor="middle">TOP</text>
          </svg>
          <button class="wcs">WCS<i></i></button>

          <div class="navbar">
            <svg width="6" height="6"><circle cx="3" cy="3" r="2.300" fill="none" stroke="#8a8a8a" /></svg>
            <button aria-label="Wheel"><Ico n="nWheel" /></button><i class="dd"></i>
            <button aria-label="Pan"><Ico n="nHand" /></button>
            <button aria-label="Zoom"><Ico n="nZoom" /></button><i class="dd"></i>
            <button aria-label="Orbit"><Ico n="nOrbit" /></button><i class="dd"></i>
            <button aria-label="Motion"><Ico n="nMotion" /></button>
            <svg width="6" height="6"><circle cx="3" cy="3" r="2.300" fill="none" stroke="#8a8a8a" /></svg>
          </div>

          <div class="command">
            <i class="gripdots"></i><button aria-label="Close"><Ico n="x" /></button><button aria-label="Customize"><Ico n="wrench" /></button>
            <div class="line">
              <Ico n="cmd" /><i class="dd"></i>
              <label for="cmd"><b>BREAK</b> Select object:</label><input id="cmd" type="text" /><i class="up"></i>
            </div>
          </div>
        </div>

        <aside class="palette">
          <div class="side">
            <Ico n="x" /><Ico n="pin" /><Ico n="gear" />
            <span>BLOCK AUTHORING PALETTES - ALL PALETTES</span>
            <Ico n="props" />
          </div>
          <div class="items">
            <i class="track"></i>
            <ul>
              <li v-for="p in params" :key="p[1]"><button><Ico :n="p[0]" />{{ p[1] }}</button></li>
            </ul>
          </div>
          <div class="vtabs">
            <button v-for="(t, i) in ['Parameters', 'Actions', 'Parameter Sets', 'Constraints']" :key="t" :class="{ on: i === 0 }"><span>{{ t }}</span></button>
          </div>
        </aside>
      </div>

      <aside class="props">
        <h3>PROPERTIES</h3>
        <div class="sel">
          <div class="combo"><select aria-label="Selection"><option>No selection</option></select><span class="arrow"><i class="dd"></i></span></div>
          <button aria-label="Toggle"><Ico n="quick" /></button>
          <button aria-label="Select objects"><Ico n="pick" /></button>
        </div>
        <div class="list">
          <table v-for="s in sections" :key="s[0]">
            <colgroup><col class="name" /><col /></colgroup>
            <thead><tr><th colspan="2">{{ s[0] }}</th></tr></thead>
            <tbody>
              <tr v-for="r in s[1]" :key="r[0]">
                <th scope="row">{{ r[0] }}</th>
                <td :class="r[2]"><i v-if="r[2] === 'swatch' || r[2] === 'line'"></i>{{ r[1] }}</td>
              </tr>
            </tbody>
          </table>
        </div>
      </aside>
    </main>

    <footer>
      <div class="layouts">
        <button class="on">Model</button><button>Layout1</button><button>Layout2</button>
        <button class="plus" aria-label="New layout"><svg width="8" height="8"><path d="M4 0v8M0 4h8" stroke="#bbb" stroke-width="1.500" /></svg></button>
      </div>
      <div class="status">
        <div class="grp"><button>MODEL</button></div>
        <div v-for="(g, i) in status" :key="i" class="grp">
          <template v-for="(n, j) in g" :key="j">
            <i v-if="n === 'v'" class="dd"></i>
            <button v-else-if="n === '1:1'">1:1</button>
            <button v-else :aria-label="n"><Ico :n="n" /></button>
          </template>
        </div>
      </div>
    </footer>
  </div>
</template>

<style>
body { background: #3b3b3b; overflow: hidden; }
</style>

<style scoped>
.app { height: 100vh; display: flex; flex-direction: column; overflow: hidden; font: 10px/14px "Open Sans", "Noto Sans", sans-serif; color: #e6e6e6; background: #3b3b3b; }
.app * { box-sizing: border-box; }
button, input, select { font: inherit; color: inherit; background: none; border: 0; padding: 0; margin: 0; }
button { display: flex; align-items: center; justify-content: center; flex: none; white-space: nowrap; }
select { appearance: none; outline: 0; }
svg { display: block; flex: none; }
i.dd { flex: none; width: 0; height: 0; border: 3px solid transparent; border-top-color: #eee; border-bottom: 0; }
i.big-dd { border-width: 4px; border-bottom: 0; }
i.faint { border-top-color: #888; }
h1, h2, h3, ul { margin: 0; padding: 0; font-size: 10px; font-weight: 400; list-style: none; }

.titlebar { flex: none; display: flex; height: 19px; background: #fff; }
.quick { width: 179px; display: flex; align-items: center; gap: 4px; padding-left: 5px; background: linear-gradient(#787878, #4c4c4c); }
.quick button { width: 16px; }
.quick .narrow { width: 10px; }
h1 { flex: 1; color: #222; line-height: 19px; text-align: center; white-space: pre; }
h1 span { margin-left: 10px; }
.info { width: 378px; display: flex; align-items: center; background: linear-gradient(#707070, #4a4a4a); }
.tri-r { border: 3px solid transparent; border-left: 4px solid #eee; border-right: 0; margin: 0 5px 0 4px; }
.info input { width: 153px; height: 18px; padding: 0 3px; background: #6d6d6d; border: 1px solid #484848; font-style: italic; }
.info input::placeholder { color: #bdbdbd; opacity: 1; }
.info button { gap: 4px; margin-left: 2px; }
.info .sign { margin-left: 4px; }
.sign + i.dd { margin-left: 39px; }
.info .cart { margin-left: 9px; }
.info .help { margin-left: 16px; margin-right: 4px; }
.info button + i.dd { margin-right: 2px; }
.win { width: 102px; display: flex; align-items: center; gap: 28px; padding-left: 35px; }

.tabs { flex: none; height: 18px; display: flex; align-items: stretch; padding-left: 3px; background: #505050; border-bottom: 1px solid #3f3f3f; }
.tabs button { color: #cfcfcf; padding: 0 7px 0 8px; }
.tabs .on { color: #fff; background: linear-gradient(#747474, #5b5b5b); border: 1px solid #8a8a8a; border-bottom: 0; padding: 0 6px; margin-bottom: -1px; }
.tabs .ctx { color: #fff; background: #625f4c; border: 1px solid #8a8048; padding: 0 6px; margin: 2px 0 2px 2px; }
.tabs .minir { padding: 0 5px 0 19px; }
.tabs i { align-self: center; }

.ribbon { flex: none; display: flex; height: 83px; background: #5a5a5a; border-bottom: 1px solid #8b8b8b; }
.panel { flex: none; display: flex; flex-direction: column; border-right: 1px solid #444; box-shadow: inset -1px 0 #666; overflow: hidden; }
.panel .body { height: 66px; display: flex; padding-top: 3px; }
.panel h2 { flex: 1; display: flex; align-items: center; justify-content: center; gap: 5px; background: linear-gradient(#4e4e4e, #464646); }
.draw { width: 155px; } .modify { width: 211px; } .annot { width: 125px; } .layers { width: 231px; } .block { width: 68px; }
.propsp { width: 187px; } .groups { width: 59px; } .utils { width: 82px; } .clipb { width: 67px; } .view { width: 53px; } .closep { flex: 1; }
.draw h2 { padding-right: 36px; }
.corner { margin-left: auto; }
.propsp h2 { padding: 0 3px 0 60px; }
.view h2 { padding: 0 3px 0 5px; }
.closep h2 { box-shadow: inset 0 -2px #6f6636; }
.big { flex-direction: column; justify-content: flex-start; line-height: 12px; }
.big svg, .letter { height: 28px; margin: 1px 0 4px; }
.letter { font: 400 29px/28px Lato, sans-serif; }
.big i { margin-top: 3px; }
.w34 { width: 34px; } .w40 { width: 40px; } .w44 { width: 44px; } .w50 { width: 50px; } .w54 { width: 54px; } .w60 { width: 60px; }
.stack { display: flex; flex-direction: column; height: 61px; padding-top: 1px; }
.stack button { height: 20px; gap: 5px; justify-content: flex-start; }
.draw .stack { margin-left: 2px; }
.modify .body { padding-left: 5px; }
.col { width: 60px; }
.col:nth-child(3) { width: 62px; }
.col i { margin-left: auto; margin-right: 4px; }
.stack button span { margin-left: -3px; }
.annot .body { padding-left: 3px; }
.annot .stack { margin-left: 2px; }
.layers .body { padding-left: 2px; }
.lay { flex: 1; padding: 1px 2px 0 0; }
.combo { display: flex; align-items: center; height: 19px; padding: 0 2px; background: linear-gradient(#4c4c4c, #646464); border: 1px solid #3c3c3c; border-bottom-color: #777; }
.combo select { flex: 1; min-width: 0; }
.lay .combo { gap: 3px; padding-left: 4px; margin-bottom: 1px; }
.sw { width: 12px; height: 12px; flex: none; }
.white { background: #fff; }
.black { background: #000; border: 1px solid #888; width: 14px; height: 14px; margin: 0 7px 0 9px; }
.lrow { display: flex; gap: 4px; height: 20px; padding-left: 4px; }
.block .body { padding-left: 1px; }
.block .stack { margin-left: 2px; }
.stack.three { gap: 6px; padding-top: 2px; margin-left: 2px; }
.combos { flex: 1; display: flex; flex-direction: column; gap: 1px; padding: 1px 1px 0 3px; }
.ln { width: 50px; height: 1px; background: #ccc; margin: 0 2px 0 6px; }
.ln.long { width: 54px; margin-left: 2px; }
.groups .stack { margin-left: 3px; }
.groups .stack button { width: 19px; justify-content: center; }
.active { background: #4f7099; border: 1px solid #7a9cc8; }
.utils .body { padding-left: 2px; }
.utils .stack { margin-left: 4px; }
.clipb .stack { margin-left: 3px; }

main { flex: 1; min-height: 0; display: flex; border-top: 4px solid #343434; }
.work { flex: 1; min-width: 0; position: relative; display: flex; flex-direction: column; }
.filetabs { flex: none; height: 22px; display: flex; background: #3c3c3c; border-bottom: 2px solid #6a6a6a; overflow: hidden; }
.ft.start { width: 60px; margin-left: -34px; padding-left: 12px; background: #555; color: #aaa; }
.ft.cur { width: 278px; justify-content: flex-end; gap: 8px; padding: 0 10px 2px 0; color: #eee; background: linear-gradient(#5c5c5c, #6a6a6a); border-radius: 0 8px 0 0; }
.ft.add { width: 25px; margin-left: 2px; padding-bottom: 1px; background: #555; border-radius: 3px 3px 9px 9px; height: 19px; }
.canvas { flex: 1; min-height: 0; position: relative; background: #9b9b9b; overflow: hidden; }
.drawing { position: absolute; inset: 0; }
.minor { stroke: #9194ac; }
.major { stroke: #868cc2; }
.mdi { position: absolute; top: 7px; right: 9px; display: flex; gap: 7px; }
.cube { position: absolute; top: 30px; right: 14px; }
.wcs { position: absolute; top: 152px; right: 45px; width: 41px; height: 14px; border-radius: 4px; background: #b6b7bf; color: #777a82; font: 9px/14px "Liberation Sans", sans-serif; gap: 4px; }
.wcs i { border: 4px solid transparent; border-top-color: #a3a4ac; border-bottom: 0; }
.navbar { position: absolute; top: 188px; right: 2px; width: 30px; height: 181px; display: flex; flex-direction: column; align-items: center; justify-content: space-between; padding: 2px 0; border: 1px solid #7d7d7d; border-radius: 6px; background: #a4a4a4; }
.navbar > svg { align-self: flex-end; margin-right: 3px; }
.navbar i.dd { border-width: 2px; border-top-color: #777; border-bottom: 0; }
.command { position: absolute; left: 182px; right: 219px; bottom: 1px; height: 21px; display: flex; align-items: center; gap: 4px; background: linear-gradient(#666, #444); padding-left: 2px; }
.gripdots { width: 4px; height: 15px; border: 1px dotted #aaa; border-width: 0 2px; }
.command button { width: 14px; }
.line { flex: 1; align-self: stretch; display: flex; align-items: center; background: #fff; color: #222; padding: 0 3px; gap: 1px; font-family: "DejaVu Sans Mono", monospace; border: 1px solid #666; border-left: 0; }
.line i.dd { border-top-color: #777; }
.line label { margin-left: 5px; white-space: pre; }
.line input { flex: 1; min-width: 0; outline: 0; }
.up { border: 3px solid transparent; border-bottom: 4px solid #222; border-top: 0; }

.palette { position: absolute; left: 6px; top: 2px; display: flex; align-items: flex-start; }
.side { width: 19px; height: 366px; display: flex; flex-direction: column; align-items: center; gap: 6px; padding: 4px 0; background: #535353; border: 1px solid #333; border-right: 0; border-radius: 3px 0 0 3px; }
.side span { writing-mode: vertical-rl; transform: rotate(180deg); margin-top: auto; color: #b9b9b9; white-space: nowrap; }
.items { width: 125px; height: 366px; display: flex; background: #5b5b5b; border: 1px solid #333; border-bottom-width: 3px; border-right-color: #444; }
.track { width: 4px; margin: 5px 0 6px 4px; background: #484848; border-radius: 2px; }
.items ul { flex: 1; display: flex; flex-direction: column; padding: 6px 0 1px 8px; }
.items li { flex: 1; display: flex; align-items: center; }
.items button { gap: 1px; }
.vtabs { width: 16px; margin: 3px 0 0 -1px; }
.vtabs button { width: 17px; height: 86px; background: #4d4d4d; color: #b5b5b5; border: 1px solid #333; border-radius: 0 3px 3px 0; margin: 0; }
.vtabs .on { background: #5b5b5b; color: #eee; border-left-color: #5b5b5b; }
.vtabs span { writing-mode: vertical-rl; transform: rotate(180deg); }

.props { flex: none; width: 250px; display: flex; flex-direction: column; background: #5a5a5a; padding: 22px 0 13px; overflow: hidden; }
.props h3 { flex: none; height: 18px; margin: 0 0 10px 2px; padding-left: 12px; background: #4d4d4d; line-height: 16px; }
.sel { flex: none; display: flex; gap: 7px; padding-left: 7px; }
.sel .combo { flex: none; width: 209px; height: 20px; background: linear-gradient(#565656, #6a6a6a); padding-right: 0; }
.arrow { align-self: stretch; display: flex; align-items: center; padding: 0 3px; border-left: 1px solid #444; }
.list { flex: 1; min-height: 0; overflow: hidden; padding: 3px 0 0 10px; }
table { width: 100%; border-spacing: 0; table-layout: fixed; margin-bottom: 3px; }
.name { width: 127px; }
th, td { text-align: left; font-weight: 400; padding: 0; white-space: nowrap; line-height: 15px; height: 16px; border-bottom: 1px solid #515151; }
thead th { font-weight: 700; color: #fff; background: #494949; padding-left: 5px; height: 17px; border: 1px solid #3c3c3c; border-width: 1px 0 1px 1px; }
tbody th { padding-left: 20px; background: linear-gradient(90deg, transparent 15px, #515151 15px, #515151 16px, transparent 16px); }
td { padding-left: 1px; border-left: 1px solid #515151; overflow: hidden; }
td.dim { color: #a6a6a6; }
.swatch i { display: inline-block; width: 9px; height: 9px; background: #000; margin: 0 5px 0 1px; vertical-align: -1px; }
td.line { display: table-cell; background: none; color: inherit; font-family: inherit; border-width: 0 0 1px 1px; border-style: solid; border-color: #515151; padding: 0 0 0 2px; }
td.line i { display: inline-block; width: 54px; height: 1px; background: #ccc; margin-right: 4px; vertical-align: 4px; }

footer { flex: none; height: 19px; display: flex; justify-content: space-between; background: #3a3a3a; overflow: hidden; }
.layouts { display: flex; height: 16px; }
.layouts button { width: 54px; color: #b5b5b5; background: #505050; border-radius: 0 0 8px 8px; margin-right: 1px; }
.layouts .on { color: #fff; font-weight: 700; background: #666; width: 50px; margin-left: -28px; }
.layouts .plus { width: 20px; margin-left: 2px; }
.status { display: flex; margin-right: -19px; }
.grp { display: flex; align-items: center; background: #575757; border: 1px solid #6c6c6c; border-width: 1px 0 0 1px; margin: 1px 2px 0 0; padding: 0 3px; gap: 6px; height: 22px; }
.grp:nth-last-child(2) { gap: 3px; padding: 0 2px; }
</style>
